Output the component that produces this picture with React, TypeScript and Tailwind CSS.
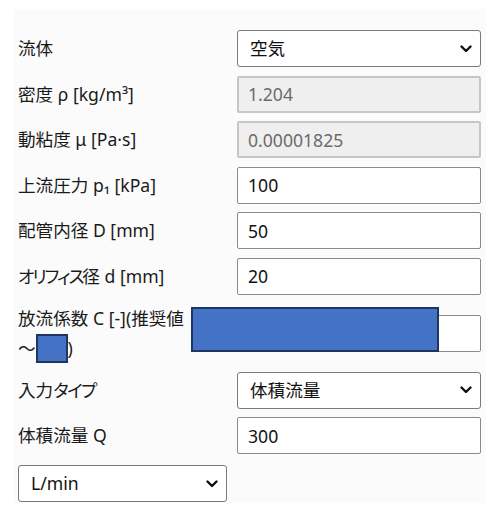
import type { ReactNode } from 'react';

const font = { fontFamily: '"Noto Sans", "Noto Sans CJK JP", sans-serif' };

function Chevron() {
  return (
    <svg
      className="pointer-events-none absolute right-[9px] top-1/2 -translate-y-1/2"
      width="12"
      height="8"
      viewBox="0 0 12 8"
      fill="none"
    >
      <path d="M1.5 1.5 6 6l4.5-4.5" stroke="#111" strokeWidth="2.4" strokeLinecap="round" strokeLinejoin="round" />
    </svg>
  );
}

function Select({ value, options, className = '' }: { value: string; options: string[]; className?: string }) {
  return (
    <div className={`relative ${className}`}>
      <select
        defaultValue={value}
        className="h-[37px] w-full appearance-none rounded-[3px] border border-[#7a7a7a] bg-white pl-[12px] text-[17.6px] text-[#111] outline-none"
        style={font}
      >
        {options.map(o => (
          <option key={o}>{o}</option>
        ))}
      </select>
      <Chevron />
    </div>
  );
}

function Field({ value, disabled }: { value: string; disabled?: boolean }) {
  return (
    <input
      defaultValue={value}
      disabled={disabled}
      className={
        disabled
          ? 'h-[37px] w-full rounded-[2px] border-2 border-[#c6c6c6] bg-[#efefef] pl-[9px] text-[17.6px] text-[#6b6b6b] outline-none'
          : 'h-[37px] w-full rounded-[2px] border border-[#8a8a8a] bg-white pl-[10px] text-[17.6px] text-[#111] outline-none'
      }
      style={font}
    />
  );
}

function Row({ label, children }: { label: ReactNode; children: ReactNode }) {
  return (
    <div className="grid grid-cols-[209px_244px] items-center gap-x-[10px]">
      <div className="text-[17.6px] text-[#1a1a1a] [font-feature-settings:'palt']">{label}</div>
      {children}
    </div>
  );
}

export default function App() {
  return (
    <div className="h-[512px] bg-white pl-[13px] pr-[3px] pt-[9px]" style={font}>
      <div className="flex flex-col gap-[8.5px] bg-[#fbfbfb] px-[5px] pb-[1px] pt-[21px]">
        <Row label="流体">
          <Select value="空気" options={['空気', '水']} />
        </Row>
        <Row label="密度 ρ [kg/m³]">
          <Field value="1.204" disabled />
        </Row>
        <Row label="動粘度 μ [Pa·s]">
          <Field value="0.00001825" disabled />
        </Row>
        <Row label="上流圧力 p₁ [kPa]">
          <Field value="100" />
        </Row>
        <Row label="配管内径 D [mm]">
          <Field value="50" />
        </Row>
        <Row label={<><span className="tracking-[-2px]">オリフィス</span>径 d [mm]</>}>
          <Field value="20" />
        </Row>
        <div className="relative grid grid-cols-[209px_244px] items-center gap-x-[10px]">
          <div className="text-[17.6px] leading-[30px] text-[#1a1a1a]">
            <div className="whitespace-nowrap">放流係数 C [-](推奨値</div>
            <div className="flex items-center">
              <span>～</span>
              <span className="inline-block h-[29px] w-[32px] border-2 border-[#1f3660] bg-[#4472c4]" />
              <span>)</span>
            </div>
          </div>
          <Field value="" />
          <div className="absolute left-[173px] top-[4px] h-[45px] w-[248px] border-2 border-[#1f3660] bg-[#4472c4]" />
        </div>
        <Row label={<>入力<span className="tracking-[-1.5px]">タイプ</span></>}>
          <Select value="体積流量" options={['体積流量', '質量流量']} />
        </Row>
        <Row label="体積流量 Q">
          <Field value="300" />
        </Row>
        <Select value="L/min" options={['L/min', 'm³/h']} className="mt-[2.5px] w-[209px]" />
      </div>
    </div>
  );
}
